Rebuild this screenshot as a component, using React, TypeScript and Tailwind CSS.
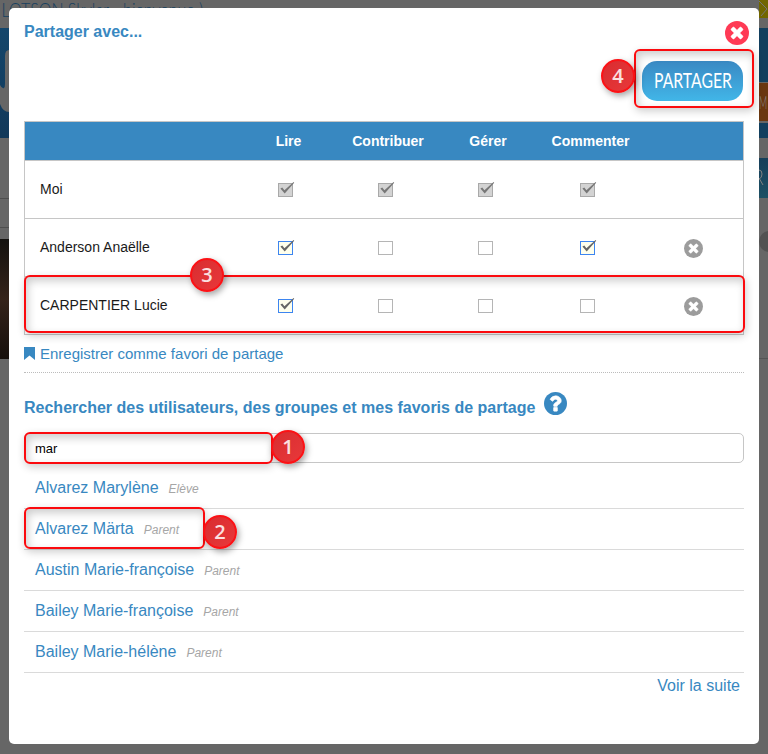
import type { ReactNode } from 'react';

type State = 'locked' | 'on' | 'off';

const SANS = "font-['Liberation_Sans',Arial,sans-serif]";

function Tick({ state, className = 'mr-[5px]' }: { state: State; className?: string }) {
  const box =
    state === 'locked'
      ? 'border-[#a9a9a9] bg-[#d3d3d3]'
      : state === 'on'
        ? 'border-[#3d85f0] bg-[#ffffec]'
        : 'border-[#b5b5b5] bg-white';
  return (
    <span className={`mt-px block h-[14px] w-[15px] border ${box} ${className}`}>
      {state !== 'off' && (
        <svg viewBox="0 0 17 14" className="-mt-[2px] -ml-px block h-[14px] w-[17px] max-w-none">
          <path
            d="M2.4 6.6 L4.3 5.6 L6.4 8.2 L15.6 0 L16.2 0.7 L6.7 11.4 Z"
            fill={state === 'locked' ? '#777' : '#666'}
          />
        </svg>
      )}
    </span>
  );
}

function CrossCircle({ className }: { className: string }) {
  return (
    <svg viewBox="0 128 1536 1536" className={className}>
      <circle cx="768" cy="896" r="768" fill="currentColor" />
      <path
        fill="#fff"
        stroke="#fff"
        strokeWidth="30"
        d="M1149 1122q0-26-19-45l-181-181l181-181q19-19 19-45q0-27-19-46l-90-90q-19-19-46-19q-26 0-45 19l-181 181l-181-181q-19-19-45-19q-27 0-46 19l-90 90q-19 19-19 46q0 26 19 45l181 181l-181 181q-19 19-19 45q0 27 19 46l90 90q19 19 46 19q26 0 45-19l181-181l181 181q19 19 45 19q27 0 46-19l90-90q19-19 19-46z"
      />
    </svg>
  );
}

function Help() {
  return (
    <svg viewBox="128 128 1536 1536" className="h-[23px] w-[23px] text-[#3888c1]">
      <circle cx="896" cy="896" r="768" fill="currentColor" />
      <path
        fill="#fff"
        stroke="#fff"
        strokeWidth="40"
        d="M1024 1376v-192q0-14-9-23t-23-9h-192q-14 0-23 9t-9 23v192q0 14 9 23t23 9h192q14 0 23-9t9-23zm256-672q0-88-55.500-163t-138.500-116-170-41q-243 0-371 213-15 24 8 42l132 100q7 6 19 6 16 0 25-12 53-68 86-92 34-24 86-24 48 0 85.500 26t37.500 59q0 38-20 61t-68 45q-63 28-115.500 86.500t-52.500 125.500v36q0 14 9 23t23 9h192q14 0 23-9t9-23q0-19 21.500-49.500t54.500-49.500q32-18 49-28.500t46-35 44.500-48 28-60.500 12.500-81z"
      />
    </svg>
  );
}

function Frame({ className }: { className: string }) {
  return (
    <div
      className={`pointer-events-none absolute rounded-[6px] border-2 border-[#fb0a0e] shadow-[1px_3px_8px_rgba(0,0,0,0.2),inset_2px_4px_8px_rgba(0,0,0,0.2)] ${className}`}
    />
  );
}

function Step({ className, children }: { className: string; children: ReactNode }) {
  return (
    <div
      className={`absolute flex h-[34px] w-[34px] items-center justify-center rounded-full border-2 border-[#fb1216] bg-linear-to-br from-[#d92d30] to-[#e8383a] font-['Open_Sans','Noto_Sans',sans-serif] text-[20px] leading-none font-semibold text-[#fbe0e0] shadow-[2px_3px_6px_rgba(0,0,0,0.35)] ${className}`}
    >
      {children}
    </div>
  );
}

const COLUMNS = 'grid grid-cols-[213px_100px_100px_100px_105px_100px]';

const rows: { name: string; states: State[]; removable: boolean }[] = [
  { name: 'Moi', states: ['locked', 'locked', 'locked', 'locked'], removable: false },
  { name: 'Anderson Anaëlle', states: ['on', 'off', 'off', 'on'], removable: true },
  { name: 'CARPENTIER Lucie', states: ['on', 'off', 'off', 'off'], removable: true },
];

const results = [
  ['Alvarez Marylène', 'Elève'],
  ['Alvarez Märta', 'Parent'],
  ['Austin Marie-françoise', 'Parent'],
  ['Bailey Marie-françoise', 'Parent'],
  ['Bailey Marie-hélène', 'Parent'],
];

function Backdrop() {
  return (
    <div className="flex h-full justify-between">
      <div className="flex w-[280px] flex-col">
        <div className="h-[28px]">
          <span className="block w-[275px] origin-left scale-x-[0.8] pl-[2px] font-['Lato',sans-serif] text-[20px] leading-[18px] font-light whitespace-nowrap text-[#16405f]">
            LOTSON Skylar - bienvenue )
          </span>
        </div>
        <div className="h-[110px] bg-linear-to-b from-[#14466b] to-[#12395a]">
          <svg viewBox="0 0 20 110" className="h-[110px] w-[20px]">
            <path d="M5 28 Q5 22 9 22 H20 V84 H9 Q3 84 0 76 V57 Q2 61 4 60 Q5 59 5 56 Z" fill="#666" />
          </svg>
        </div>
        <div className="h-[60px]" />
        <div className="h-[30px] border-y border-[#4e4e4e]" />
        <div className="h-[11px]" />
        <div className="h-[120px] w-[20px] bg-linear-to-b from-[#14120f] via-[#35231a] to-[#17100c]" />
      </div>
      <div className="flex w-[9px] flex-col overflow-hidden">
        <div className="h-[18px] bg-[#716600]">
          <svg viewBox="0 0 9 18" className="h-[18px] w-[9px]">
            <path d="M0 1 L8 9 L2 16" stroke="#777" fill="none" />
          </svg>
        </div>
        <div className="h-[10px]" />
        <div className="h-[54px] bg-[#123f5e]" />
        <div className="h-px" />
        <div className="h-[38px] bg-[#6a3710] pt-[9px]">
          <span className="block w-[18px] origin-left scale-x-[0.5] font-['Lato',sans-serif] text-[18px] leading-[20px] font-light text-[#858585]">
            M
          </span>
        </div>
        <div className="h-[2px]" />
        <div className="h-[15px] bg-[#123f5e]" />
        <div className="h-[20px]" />
        <div className="h-[40px] bg-linear-to-b from-[#173f5a] to-[#1d5064]">
          <svg viewBox="0 0 9 40" className="h-[40px] w-[9px]">
            <path d="M0 12 Q3 12 3 16 Q3 20 0 21 M0 20 L4 27" stroke="#808080" fill="none" />
          </svg>
        </div>
        <div className="h-[33px]" />
        <div className="h-[21px] w-[21px] rounded-full bg-[#525252]" />
        <div className="h-[107px] border-b border-[#555]" />
      </div>
    </div>
  );
}

export default function App() {
  return (
    <div className={`relative h-[754px] w-[768px] overflow-hidden bg-[#666] ${SANS}`}>
      <Backdrop />

      <div className="absolute top-[8px] left-[9px] flex h-[736px] w-[750px] flex-col rounded-[5px] bg-white px-[15px]">
        <div className="flex h-[53px] items-start justify-between">
          <h1 className="mt-[15px] text-[16px] leading-[18px] font-bold text-[#3888c1]">Partager avec...</h1>
          <CrossCircle className="mt-[13px] -mr-[5px] h-[24px] w-[24px] text-[#ff3a55]" />
        </div>

        <div className="flex h-[60px] justify-end pr-px">
          <button className="flex h-[40px] w-[101px] items-center justify-center rounded-[15px] bg-linear-to-b from-[#3a89c3] to-[#41b6e8] pb-[2px] font-['Lato',sans-serif] text-[21px] text-white">
            <span className="block scale-x-[0.75]">PARTAGER</span>
          </button>
        </div>

        <div className="h-[214px] w-[720px] border border-[#c6c6c6]">
          <div className={`${COLUMNS} h-[38px] items-center bg-[#3888c1] text-center text-[14px] font-bold text-white`}>
            <span />
            <span className="pl-px">Lire</span>
            <span>Contribuer</span>
            <span>Gérer</span>
            <span>Commenter</span>
          </div>
          {rows.map((row) => (
            <div key={row.name} className={`${COLUMNS} h-[58px] items-center justify-items-center border-t border-[#c6c6c6]`}>
              <span className="justify-self-start pl-[15px] text-[14px] text-[#1a1a1a]">{row.name}</span>
              {row.states.map((state, i) => (
                <Tick key={i} state={state} className={i === 3 ? 'mr-[6px]' : 'mr-[5px]'} />
              ))}
              {row.removable && <CrossCircle className="mt-[2px] h-[19px] w-[19px] text-[#9c9c9c]" />}
            </div>
          ))}
        </div>

        <div className="flex h-[38px] items-center gap-[5px] border-b border-dotted border-[#bcbcbc] text-[15px] text-[#3888c1]">
          <svg viewBox="0 0 11 13" className="-mt-px h-[13px] w-[11px]">
            <path d="M0 0 H11 V13 L5.500 8.500 L0 13 Z" fill="currentColor" />
          </svg>
          <span className="pt-[2px]">Enregistrer comme favori de partage</span>
        </div>

        <div className="flex h-[60px] gap-[9px] pt-[19px]">
          <h2 className="pt-[7px] text-[16px] leading-[18px] font-bold text-[#3888c1]">
            Rechercher des utilisateurs, des groupes et mes favoris de partage
          </h2>
          <Help />
        </div>

        <div className="flex h-[30px] items-center rounded-[5px] border border-[#c6c6c6] pt-[2px] pl-[10px] text-[13px] text-black">
          mar
        </div>

        <ul className="pt-[5px]">
          {results.map(([name, role]) => (
            <li key={name} className="flex h-[41px] items-baseline gap-[10px] border-b border-[#dadada] pt-[10px] pl-[11px] text-[#3888c1]">
              <span className="text-[16px] leading-[20px]">{name}</span>
              <span className="text-[12px] text-[#a6a6a6] italic">{role}</span>
            </li>
          ))}
        </ul>
        <div className="pt-[3px] pr-[4px] text-right text-[16px] leading-[20px] text-[#3888c1]">Voir la suite</div>
      </div>

      <Frame className="top-[49px] left-[634px] h-[59px] w-[120px]" />
      <Frame className="top-[275px] left-[24px] h-[58px] w-[721px]" />
      <Frame className="top-[432px] left-[24px] h-[32px] w-[249px]" />
      <Frame className="top-[507px] left-[24px] h-[42px] w-[181px]" />
      <Step className="top-[59px] left-[601px]">4</Step>
      <Step className="top-[258px] left-[190px]">3</Step>
      <Step className="top-[430px] left-[271px]">1</Step>
      <Step className="top-[515px] left-[203px]">2</Step>
    </div>
  );
}
